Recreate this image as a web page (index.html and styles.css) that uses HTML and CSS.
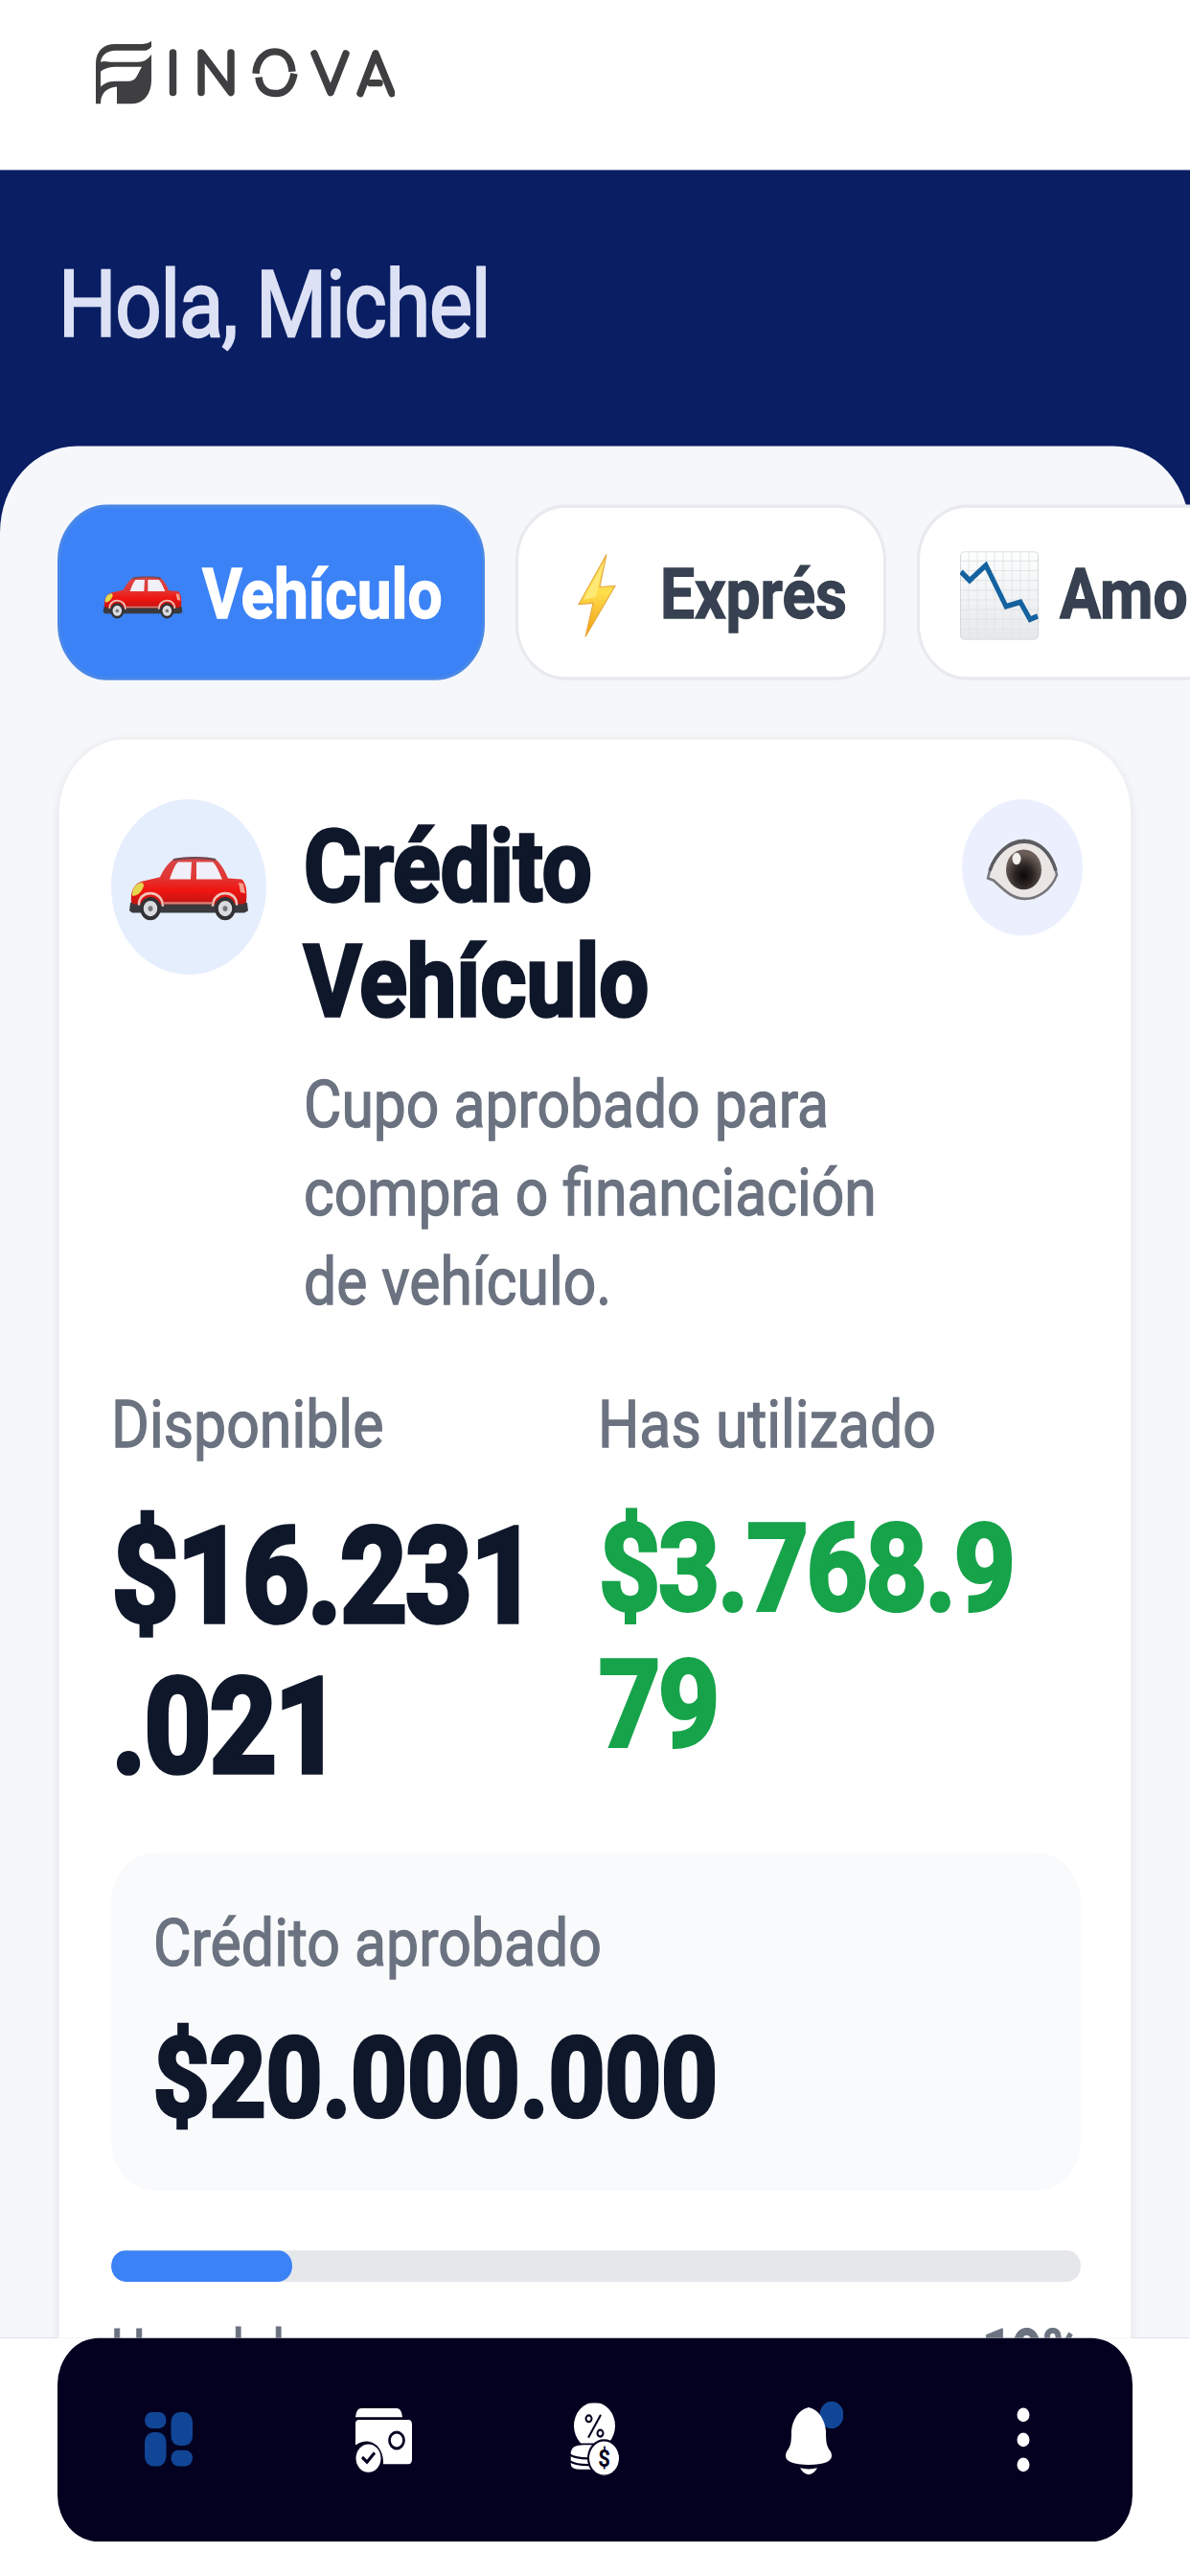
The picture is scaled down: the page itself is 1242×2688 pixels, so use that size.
FILE: index.html
```html
<!DOCTYPE html>
<html lang="es">
<head>
<meta charset="utf-8">
<title>Finova</title>
<link rel="stylesheet" href="styles.css">
</head>
<body>
<svg class="sprite" width="0" height="0" aria-hidden="true">
  <defs>
    <linearGradient id="paint" x1="0" y1="0" x2="0" y2="1"><stop offset="0" stop-color="#d8474a"/><stop offset=".45" stop-color="#e23532"/><stop offset=".7" stop-color="#f01512"/><stop offset="1" stop-color="#c01512"/></linearGradient>
    <linearGradient id="gold" x1="0" y1="0" x2="0" y2="1"><stop offset="0" stop-color="#f5c04a"/><stop offset=".45" stop-color="#ffdf4d"/><stop offset="1" stop-color="#f29b12"/></linearGradient>
    <linearGradient id="sheet" x1="0" y1="0" x2="0" y2="1"><stop offset="0" stop-color="#fdfefe"/><stop offset="1" stop-color="#e6e8ea"/></linearGradient>
    <radialGradient id="iris" cx=".5" cy=".65" r=".55"><stop offset="0" stop-color="#0c0908"/><stop offset=".45" stop-color="#2b2422"/><stop offset="1" stop-color="#6b5e58"/></radialGradient>
    <symbol id="car" viewBox="0 0 126 60">
      <path d="M2 43 8 38H118L124 43 125 50 121 52H4L1 50Z" fill="#3a3a3e"/>
      <path d="M3 42C2 32 6 25 14 23L33 19C38 10 43 4 49 2 62 0 78 0 90 2 96 5 101 14 104 20L118 21C123 24 124 32 123 42L120 44H5Z" fill="url(#paint)"/>
      <path d="M47 3C60 .500 80 .500 91 3" fill="none" stroke="#6d4a50" stroke-width="2"/>
      <path d="M43 21C46 13 49 7 52 5H66L65 21ZM71 5H88C92 8 95 15 98 21H71Z" fill="#f1eff7"/>
      <path d="M4 35C4 29 8 24 15 24L16 27C14 33 9 37 4 36Z" fill="#e3d74d"/>
      <path d="M115 24 120 25 122 34 117 33Z" fill="#f2a08e"/>
      <path d="M11 45C10 30 36 30 36 46M88 46C88 30 114 30 113 45" fill="none" stroke="#f0c3b8" stroke-width="2.500"/>
      <path d="M36 43H88" stroke="#d9827c" stroke-width="2"/>
      <g fill="#d9dbde" stroke="#323236" stroke-width="3.500"><circle cx="23" cy="48" r="9"/><circle cx="101" cy="48" r="9"/></g>
      <g fill="#777"><circle cx="23" cy="48" r="2.500"/><circle cx="101" cy="48" r="2.500"/></g>
    </symbol>
  </defs>
</svg>
<div class="screen">
  <header class="topbar">
    <svg class="logo" viewBox="0 0 312 66" preserveAspectRatio="none" role="img" aria-label="Finova">
      <path d="M0 66V24C0 10 8 3 20 3H46Q53 4 58 0V6Q54 10 50 10H20C12 10 6 15 5 22 9 20 13 22 18 22H44Q53 22 58 14V40C58 56 50 66 36 66H22V48C12 49 5 54 5 66ZM5 32C10 28 15 27 22 27H48C45 32 44 35 42 38 40 41 37 42 34 42H20C13 42 8 45 5 48Z" fill="#3f3f41" fill-rule="evenodd"/>
      <g fill="none" stroke="#3f3f41" stroke-width="7.500" stroke-linecap="round" stroke-linejoin="round">
        <path d="M80.500 12V54M110 54V12L141 54V12M228 13 245 54 261 13M276 55 292 13 309 55M287 44H296"/>
        <g stroke-linecap="butt"><path d="M167 34C168 20 176 11 187 11S204 20 205 32M207 34C204 50 197 55 187 55S171 49 170 38"/></g>
      </g>
    </svg>
  </header>
  <main class="main">
    <section class="hero"><h1 class="greeting">Hola, Michel</h1></section>
    <section class="panel">
      <div class="chips">
        <div class="chip chip-active"><svg class="chip-car"><use href="#car"/></svg><span>Vehículo</span></div>
        <div class="chip chip-express">
          <svg class="chip-bolt" viewBox="0 0 40 78"><path d="M30 1 1 47 16 46 8 77 39 30 23 31Z" fill="url(#gold)" stroke="#e3a63a" stroke-width="1"/><path d="M28 6 6 43 19 40Z" fill="#ffe873"/></svg>
          <span>Exprés</span></div>
        <div class="chip chip-amort">
          <svg class="chip-chart" viewBox="0 0 82 82"><rect x=".5" y=".5" width="81" height="81" rx="4" fill="url(#sheet)" stroke="#d5d8da"/><path d="M9 1V81M18 1V81M27 1V81M36 1V81M45 1V81M54 1V81M63 1V81M72 1V81M1 9H81M1 18H81M1 27H81M1 36H81M1 45H81M1 54H81M1 63H81M1 72H81" stroke="#e2e5e8" stroke-width="1"/><path d="M1 19 10 27 27 13 48 51 63 47 73 63 81 60" fill="none" stroke="#14629f" stroke-width="5"/></svg>
          <span>Amo</span></div>
      </div>
      <article class="card">
        <div class="card-head">
          <div class="avatar"><svg class="avatar-car"><use href="#car"/></svg></div>
          <div class="card-copy">
            <h2 class="card-title">Crédito Vehículo</h2>
            <p class="card-desc">Cupo aprobado para compra o financiación de vehículo.</p>
          </div>
          <button class="eye-btn" aria-label="Ocultar saldo">
            <svg class="eye" viewBox="0 0 76 58"><path d="M2 37C6 18 22 2 40 2 57 2 71 18 74 34 68 48 54 56 41 56 26 56 16 45 8 39Z" fill="#e9e6e4" stroke="#77777b" stroke-width="2.500"/><path d="M4 30C10 14 24 3 40 3 56 3 68 14 73 30" fill="none" stroke="#5c5c61" stroke-width="3.500"/><circle cx="39.500" cy="29" r="18.500" fill="url(#iris)"/><ellipse cx="32" cy="19" rx="4.500" ry="5.500" fill="#f2eeec"/></svg>
          </button>
        </div>
        <div class="amounts">
          <div class="amount"><span class="label">Disponible</span><strong class="value">$16.231.021</strong></div>
          <div class="amount"><span class="label">Has utilizado</span><strong class="value value-used">$3.768.979</strong></div>
        </div>
        <div class="approved"><span class="label">Crédito aprobado</span><strong class="approved-value">$20.000.000</strong></div>
        <div class="track"><div class="fill" style="width:18.7%"></div></div>
        <div class="usage"><span>Uso del cupo</span><strong>19%</strong></div>
      </article>
    </section>
  </main>
  <footer class="footer">
    <nav class="nav">
      <a class="nav-item"><svg class="icon-dash" viewBox="0 0 50 50"><g fill="#114596"><rect width="22.500" height="15" rx="7.500"/><rect y="18.500" width="22.500" height="31.500" rx="9"/><rect x="27.500" width="22.500" height="31" rx="9"/><rect x="27.500" y="35" width="22.500" height="15" rx="7.500"/></g></svg></a>
      <a class="nav-item"><svg class="icon-wallet" viewBox="0 0 60 60"><path d="M0 8Q1 0 6 0H43Q48 0 49 8ZM4 10.500H55Q59 10.500 59 15V47Q59 51.500 55 51.500H29C30 34 14 25 0 34V14Q0 10.500 4 10.500Z" fill="#fff"/><circle cx="43" cy="29.500" r="7.500" fill="none" stroke="#030020" stroke-width="2.700"/><circle cx="13.500" cy="46" r="13" fill="#fff"/><path d="M7 45 12 49.500 20 41" fill="none" stroke="#030020" stroke-width="3"/></svg></a>
      <a class="nav-item"><svg class="icon-coins" viewBox="0 0 52 67"><circle cx="25.500" cy="21" r="21.500" fill="#fff"/><g fill="none" stroke="#030020" stroke-width="2"><circle cx="19.500" cy="14.500" r="3"/><circle cx="31.500" cy="28" r="3"/><path d="M32 11 19 32"/></g><path d="M0 45Q1 38 14 38H26V62H14Q1 63 0 57Z" fill="#fff" stroke="#030020" stroke-width="1.500"/><path d="M0 48Q8 52 24 51M0 54Q8 58 24 57" fill="none" stroke="#030020" stroke-width="2"/><circle cx="35.500" cy="51" r="16.500" fill="#fff" stroke="#030020" stroke-width="2"/><text x="35.500" y="58.500" text-anchor="middle" class="coin">$</text></svg></a>
      <a class="nav-item"><svg class="icon-bell" viewBox="0 0 60 68"><circle cx="48" cy="13" r="12.500" fill="#114596"/><path d="M24 6C34 8 41 17 42 28 42 40 43 42 47 47 51 55 43 59 24 59S-3 55 1 47C5 42 6 40 6 28 7 17 14 8 24 6ZM15 62Q24 64 33 62 29 68 24 68T15 62Z" fill="#fff"/></svg></a>
      <a class="nav-item"><svg class="icon-more" viewBox="0 0 14 60"><g fill="#fff"><circle cx="7" cy="7" r="6.500"/><circle cx="7" cy="30" r="6.500"/><circle cx="7" cy="53" r="6.500"/></g></svg></a>
    </nav>
  </footer>
</div>
</body>
</html>
```
FILE: styles.css
```css
* { box-sizing: border-box; margin: 0; }
html, body { width: 1242px; height: 2688px; overflow: hidden; background: #fff; }
body { font-family: Roboto, "Liberation Sans", sans-serif; color: #0f172a; }
.sprite { position: absolute; }

/* The layout is drawn on a shorter canvas and stretched to the tall display. */
.screen { width: 1242px; height: 2379px; display: flex; flex-direction: column; transform: scaleY(1.13); transform-origin: 0 0; overflow: hidden; }

.topbar { height: 157px; flex: none; padding: 38px 100px; }
.logo { display: block; width: 312px; height: 58px; }

.main { flex: none; height: 2001.500px; background: #091e63; overflow: hidden; }
.hero { height: 254.500px; padding: 75px 61px 0; }
.greeting { font-size: 85px; line-height: 100px; font-weight: 400; letter-spacing: -1.300px; color: #dde1f5; -webkit-text-stroke: 2px currentColor; }

.panel { height: 1850px; padding: 54px 0 0 60px; background: #f5f7fb; border-radius: 80px 80px 0 0; }
.chips { display: flex; gap: 32px; }
.chip { height: 162px; flex: none; display: flex; align-items: center; padding-top: 6px; border: 3px solid #e8eaee; border-radius: 52px; background: #fff; color: #374151; font-size: 64px; font-weight: 700; white-space: nowrap; -webkit-text-stroke: 1.200px currentColor; }
.chip-active { width: 446px; padding-left: 44px; gap: 20px; background: #3b82f6; border-color: #4a88e8; color: #fff; }
.chip-express { width: 387px; padding-left: 62px; gap: 46px; }
.chip-amort { width: 560px; padding-left: 42px; gap: 22px; }
.chip-car { width: 84px; height: 40px; margin-top: 5px; }
.chip-bolt { width: 40px; height: 78px; }
.chip-chart { width: 82px; height: 82px; }

.card { width: 1122px; height: 1600px; margin-top: 53px; padding: 55px 52px 0 54px; border: 2px solid #eff0f2; border-radius: 70px; background: #fff; box-shadow: 0 3px 8px rgba(15, 23, 42, .07); }
.card-head { display: flex; align-items: flex-start; }
.avatar { width: 162px; height: 162px; flex: none; display: grid; place-items: center; border-radius: 50%; background: #e5eefd; }
.avatar-car { width: 126px; height: 60px; margin-top: 5px; }
.card-copy { width: 640px; margin: 10.500px 0 0 39px; }
.card-title { width: 500px; font-size: 92px; line-height: 106.300px; font-weight: 700; -webkit-text-stroke: 3px currentColor; }
.card-desc { margin-top: 19px; font-size: 60.600px; line-height: 81.600px; color: #6b7280; -webkit-text-stroke: 1.200px currentColor; }
.eye-btn { width: 126px; height: 126px; flex: none; margin-left: auto; margin-right: -2px; display: grid; place-items: center; padding: 0; border: 0; border-radius: 50%; background: #ecf0fe; }
.eye { width: 76px; height: 58px; margin-top: 4px; }
.amounts { display: grid; grid-template-columns: 1fr 1fr; column-gap: 4px; margin-top: 51px; }
.amount { display: flex; flex-direction: column; }
.label { font-size: 60.800px; line-height: 82px; color: #6b7280; -webkit-text-stroke: 1.200px currentColor; }
.value { width: 456px; margin-top: 30px; padding-left: 1px; font-size: 121px; line-height: 138.300px; font-weight: 700; letter-spacing: -1.300px; overflow-wrap: anywhere; -webkit-text-stroke: 5px currentColor; }
.value-used { font-size: 112px; line-height: 124.200px; letter-spacing: -2.200px; color: #16a34a; -webkit-text-stroke-width: 3.500px; }
.approved { display: flex; flex-direction: column; height: 312px; margin-top: 47.500px; padding: 43px 44px; border-radius: 46px; background: #f9fafc; }
.approved-value { margin-top: 23px; font-size: 102px; line-height: 120px; font-weight: 700; letter-spacing: .3px; -webkit-text-stroke: 4px currentColor; }
.track { height: 29px; margin-top: 55px; border-radius: 15px; background: #e5e7eb; overflow: hidden; }
.fill { height: 100%; border-radius: 15px; background: #3b82f6; }
.usage { display: flex; justify-content: space-between; margin-top: 28px; font-size: 54.600px; line-height: 70px; color: #6b7280; -webkit-text-stroke: .8px currentColor; }

.footer { flex: 1; padding: 0 60px; background: #fff; }
.nav { height: 188px; display: flex; align-items: center; padding: 0 5px; border-radius: 43px; background: #030020; }
.nav-item { flex: 1; display: grid; place-items: center; }
.icon-dash { width: 50px; height: 51px; }
.icon-wallet { width: 60px; height: 60px; margin: 3px 0 0 4px; }
.icon-coins { width: 52px; height: 67px; }
.icon-bell { width: 60px; height: 68px; margin: 0 0 4px 13px; }
.icon-more { width: 14px; height: 60px; margin-left: 4px; }
.coin { font: 700 22px Roboto, sans-serif; fill: #030020; }
```
